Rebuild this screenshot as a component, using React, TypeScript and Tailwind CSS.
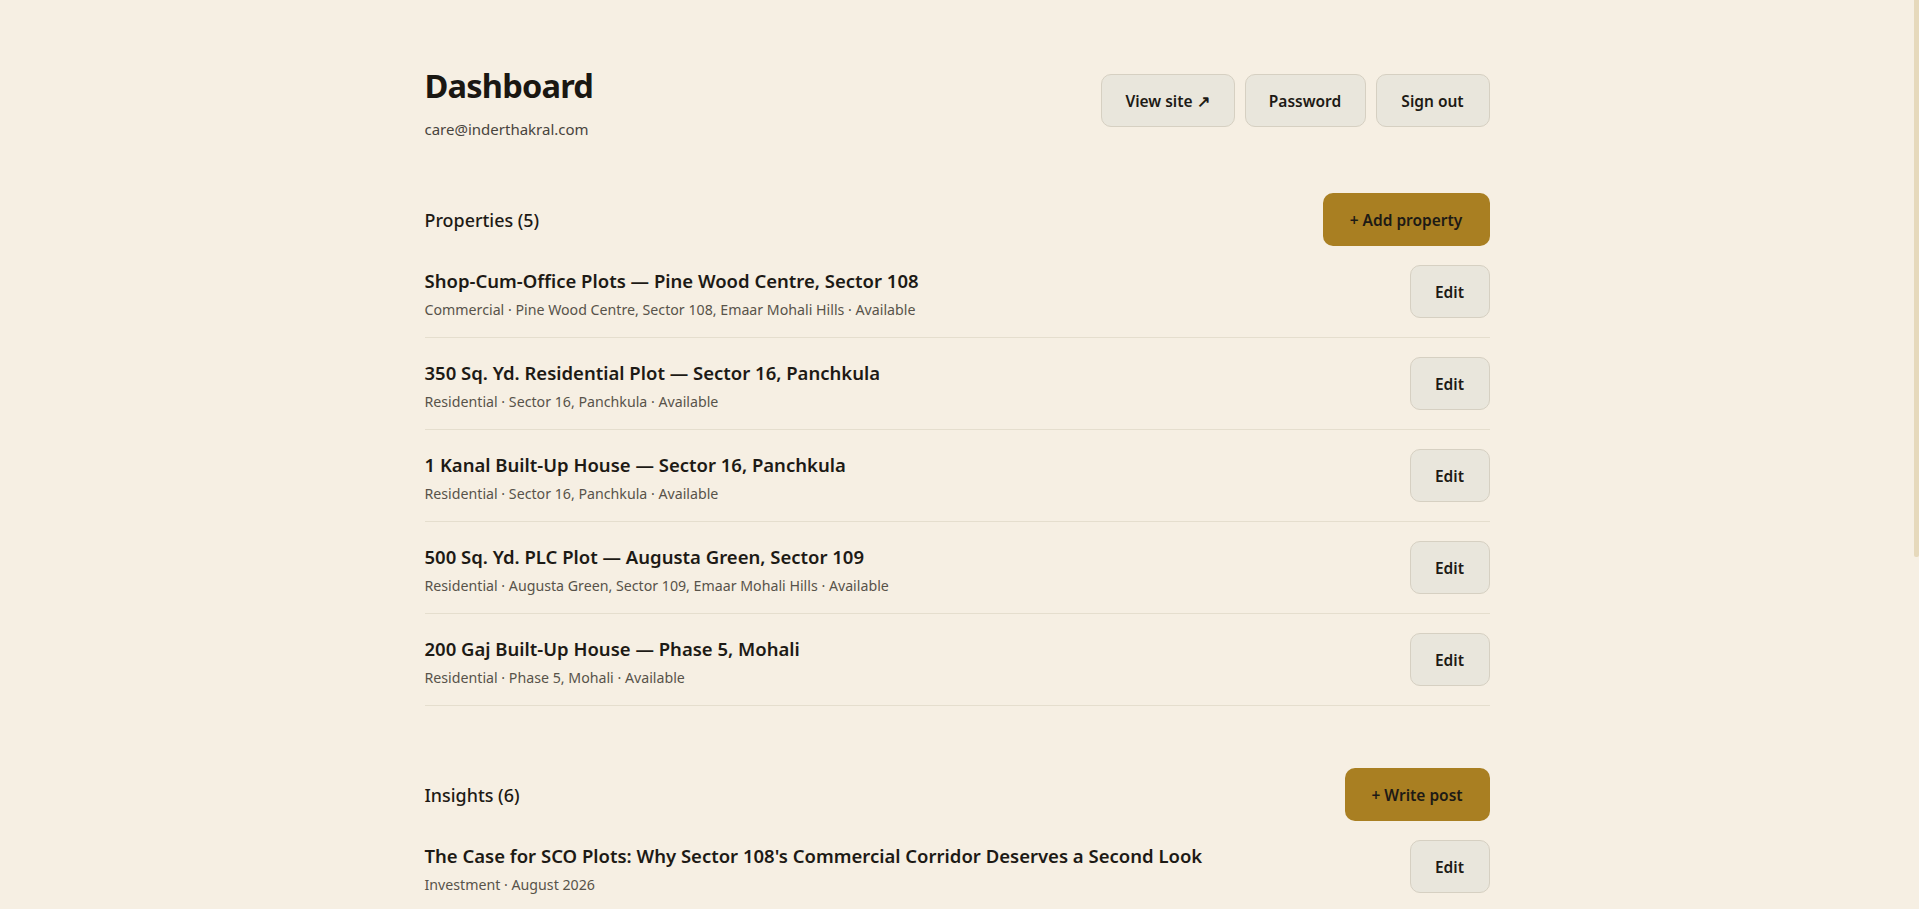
import React from "react";

type Row = {
  title: string;
  meta: string;
};

const PROPERTIES: Row[] = [
  {
    title: "Shop-Cum-Office Plots — Pine Wood Centre, Sector 108",
    meta: "Commercial · Pine Wood Centre, Sector 108, Emaar Mohali Hills · Available",
  },
  {
    title: "350 Sq. Yd. Residential Plot — Sector 16, Panchkula",
    meta: "Residential · Sector 16, Panchkula · Available",
  },
  {
    title: "1 Kanal Built-Up House — Sector 16, Panchkula",
    meta: "Residential · Sector 16, Panchkula · Available",
  },
  {
    title: "500 Sq. Yd. PLC Plot — Augusta Green, Sector 109",
    meta: "Residential · Augusta Green, Sector 109, Emaar Mohali Hills · Available",
  },
  {
    title: "200 Gaj Built-Up House — Phase 5, Mohali",
    meta: "Residential · Phase 5, Mohali · Available",
  },
];

const INSIGHTS: Row[] = [
  {
    title: "The Case for SCO Plots: Why Sector 108's Commercial Corridor Deserves a Second Look",
    meta: "Investment · August 2026",
  },
  {
    title: "Buying a Plot in Panchkula: What to Check Before You Sign",
    meta: "Guides · July 2026",
  },
  {
    title: "Emaar Mohali Hills in 2026: Where Prices Are Heading",
    meta: "Market · June 2026",
  },
  {
    title: "Built-Up House or Plot? Weighing the Options in Tricity",
    meta: "Guides · May 2026",
  },
  {
    title: "Understanding PLC Charges on Residential Plots",
    meta: "Explainers · April 2026",
  },
  {
    title: "Phase 5, Mohali: A Neighbourhood Guide for Families",
    meta: "Neighbourhoods · March 2026",
  },
];

function GhostButton({ children, className = "" }: { children: React.ReactNode; className?: string }) {
  return (
    <button
      className={`h-[53px] rounded-[10px] border border-[#d6d0c2] bg-[#e9e6dc] pt-[2px] text-[15.5px] font-semibold text-[#1d1a15] ${className}`}
    >
      {children}
    </button>
  );
}

function GoldButton({ children, className = "" }: { children: React.ReactNode; className?: string }) {
  return (
    <button
      className={`h-[53px] rounded-[10px] bg-[#a97f22] pt-[2px] text-[15.5px] font-semibold text-[#1d1a15] ${className}`}
    >
      {children}
    </button>
  );
}

function ItemRow({ row }: { row: Row }) {
  return (
    <div className="flex items-start justify-between border-b border-[#e5dece] py-[19px]">
      <div className="h-[53px] min-w-0 pt-[4px]">
        <div className="text-[18.5px] leading-[24px] font-semibold text-[#1d1a15]">{row.title}</div>
        <div className="mt-[7px] text-[14.2px] leading-[20px] text-[#58534a]">{row.meta}</div>
      </div>
      <GhostButton className="w-[80px] shrink-0">Edit</GhostButton>
    </div>
  );
}

function Section({ label, action, actionWidth, rows }: { label: string; action: string; actionWidth: string; rows: Row[] }) {
  return (
    <section>
      <div className="flex items-center justify-between">
        <h2 className="text-[17.9px] leading-[26px] font-medium text-[#1d1a15]">{label}</h2>
        <GoldButton className={actionWidth}>{action}</GoldButton>
      </div>
      <div>
        {rows.map((row) => (
          <ItemRow key={row.title} row={row} />
        ))}
      </div>
    </section>
  );
}

export default function App() {
  return (
    <div
      className="relative min-h-screen bg-[#f6efe3] pr-[5px]"
      style={{ fontFamily: '"Noto Sans", "Open Sans", sans-serif' }}
    >
      <main className="mx-auto w-[1065px] pt-[66px] pb-[90px]">
        {/* Header */}
        <header className="flex items-start justify-between">
          <div>
            <h1 className="text-[32.6px] leading-[40px] font-bold tracking-tight text-[#1a1712]">Dashboard</h1>
            <p className="mt-3 text-[15px] leading-[22px] text-[#48443d]">care@inderthakral.com</p>
          </div>
          <div className="mt-2 flex gap-[10px]">
            <GhostButton className="w-[134px]">View site ↗</GhostButton>
            <GhostButton className="w-[121px]">Password</GhostButton>
            <GhostButton className="w-[114px]">Sign out</GhostButton>
          </div>
        </header>

        <div className="mt-[53px]">
          <Section label="Properties (5)" action="+ Add property" actionWidth="w-[167px]" rows={PROPERTIES} />
        </div>

        <div className="mt-[62px]">
          <Section label="Insights (6)" action="+ Write post" actionWidth="w-[145px]" rows={INSIGHTS} />
        </div>
      </main>

      {/* thin custom scrollbar thumb */}
      <div className="fixed top-0 right-0 h-[557px] w-[5px] rounded-b-[2px] bg-[#e6d9bc]" />
    </div>
  );
}
